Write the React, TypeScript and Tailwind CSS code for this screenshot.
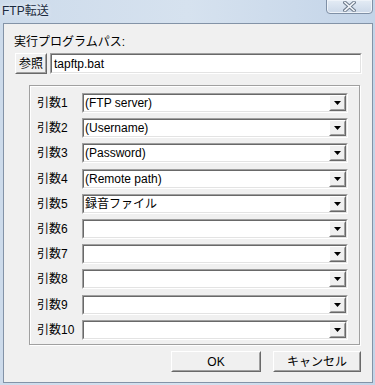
import React from 'react';

const FONT = "font-['Liberation_Sans','Noto_Sans_CJK_JP',sans-serif]";

const args = [
  '(FTP server)',
  '(Username)',
  '(Password)',
  '(Remote path)',
  '録音ファイル',
  '',
  '',
  '',
  '',
  '',
];

function Sunken({ children, className = '' }: { children?: React.ReactNode; className?: string }) {
  return (
    <div className={`border border-t-[#a0a0a0] border-l-[#a0a0a0] border-b-white border-r-white ${className}`}>
      <div className="h-full border border-t-[#696969] border-l-[#696969] border-b-[#e3e3e3] border-r-[#e3e3e3] bg-white flex items-center">
        {children}
      </div>
    </div>
  );
}

function Raised({ children, className = '' }: { children?: React.ReactNode; className?: string }) {
  return (
    <div className={`border border-t-white border-l-white border-b-[#696969] border-r-[#696969] ${className}`}>
      <div className="h-full border border-t-[#f0f0f0] border-l-[#f0f0f0] border-b-[#a0a0a0] border-r-[#a0a0a0] bg-[#f0f0f0] flex items-center justify-center text-black">
        {children}
      </div>
    </div>
  );
}

function DropArrow() {
  return (
    <svg width="7" height="4" viewBox="0 0 7 4">
      <polygon points="0,0 7,0 3.5,4" fill="#000" />
    </svg>
  );
}

export default function App() {
  return (
    <div className={`w-[375px] h-[385px] flex flex-col bg-gradient-to-r from-[#cddbeb] via-[#d6e2ef] to-[#c3d4e8] text-[12px] leading-[16px] ${FONT}`}>
      {/* title bar */}
      <div className="h-[23px] flex items-start justify-between pl-[2px] pr-[2px]">
        <span className="pt-[3px] text-[#1b2a40] [text-shadow:0_0_5px_#ffffff]">FTP転送</span>
        <div className="w-[47px] h-[15px] -mt-px rounded-b-[4px] border border-[#7f90a6] bg-gradient-to-b from-[#e4ecf5] to-[#cbd8e8] shadow-[inset_0_0_0_1px_#eef3f9] flex items-center justify-center">
          <svg width="13" height="11" viewBox="0 0 13 11">
            <path d="M2 1.5 L11 9.5 M11 1.5 L2 9.5" stroke="#6e7b8c" strokeWidth="3.6" strokeLinecap="square" />
            <path d="M2 1.5 L11 9.5 M11 1.5 L2 9.5" stroke="#f4f7fb" strokeWidth="1.6" strokeLinecap="square" />
          </svg>
        </div>
      </div>

      {/* client area */}
      <div className="ml-[3px] mr-[2px] h-[360px] border border-[#8393a7] bg-[#f0f0f0] flex flex-col text-black">
        <div className="pt-[10px] pl-[10px]">実行プログラムパス:</div>
        <div className="mt-[3px] flex pl-[11px] pr-[10px] gap-[3px]">
          <Raised className="w-[32px] h-[21px]">参照</Raised>
          <Sunken className="flex-1 h-[21px]">
            <span className="pl-[2px]">tapftp.bat</span>
          </Sunken>
        </div>

        {/* arguments group */}
        <div className="mt-[11px] ml-[25px] mr-[12px] h-[260px] border border-[#a0a0a0] shadow-[inset_1px_1px_0_#ffffff,1px_1px_0_#ffffff] pt-[7px] pb-[4px] pl-[7px] pr-[11px] flex flex-col gap-[5.2px]">
          {args.map((value, i) => (
            <div key={i} className="flex items-center h-[20px]">
              <span className="w-[45px] shrink-0">引数{i + 1}</span>
              <Sunken className="flex-1 h-[20px]">
                <span className="flex-1 pl-[1px] whitespace-nowrap">{value}</span>
                <Raised className="w-[17px] h-[16px]">
                  <DropArrow />
                </Raised>
              </Sunken>
            </div>
          ))}
        </div>

        <div className="mt-[6px] flex justify-end gap-[12px] pr-[11px]">
          <Raised className="w-[90px] h-[21px]">OK</Raised>
          <Raised className="w-[88px] h-[21px]">キャンセル</Raised>
        </div>
      </div>
    </div>
  );
}
